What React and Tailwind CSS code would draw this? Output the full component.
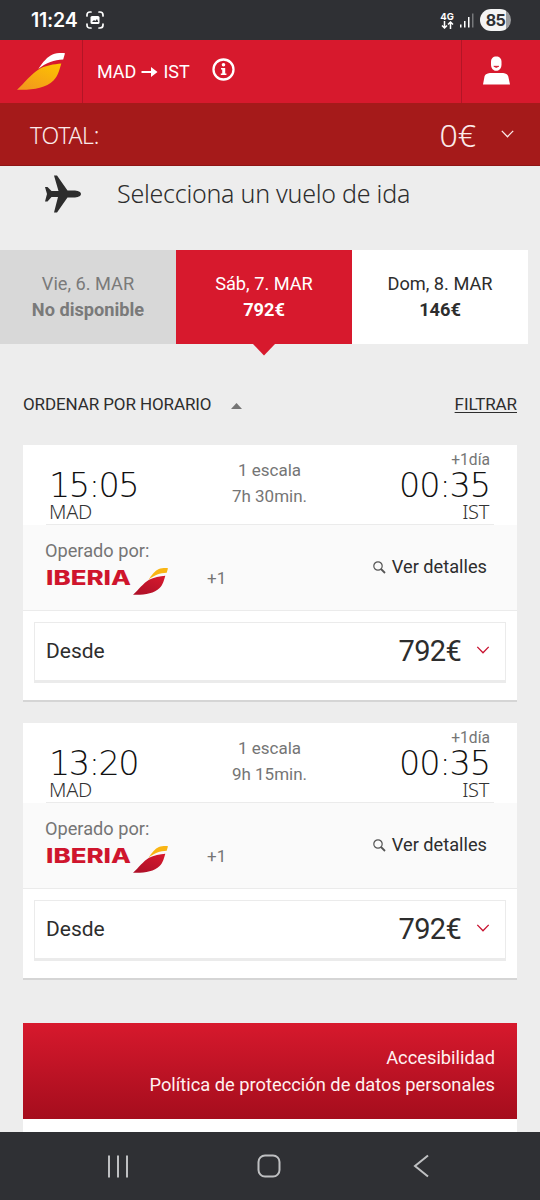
import { useState } from "react"

const flights = [
  { id: 1, departure: "15:05", arrival: "00:35", duration: "7h 30min.", price: "792€" },
  { id: 2, departure: "13:20", arrival: "00:35", duration: "9h 15min.", price: "792€" },
]

const days = [
  { label: "Vie, 6. MAR", price: "No disponible", available: false },
  { label: "Sáb, 7. MAR", price: "792€", available: true },
  { label: "Dom, 8. MAR", price: "146€", available: true },
]

function Wing({ className, top, from, to, id }) {
  return (
    <svg className={className} viewBox="17 53 48 37" preserveAspectRatio="none">
      <defs>
        <linearGradient id={id} x1="1" y1="0" x2="0.3" y2="1">
          <stop offset="0" stopColor={from} />
          <stop offset="1" stopColor={to} />
        </linearGradient>
      </defs>
      <path d="M38.300 69C43 62 47.500 56.500 52.500 54.500C56 53 61 53 65 53.200L63.200 59.600C54 60 46.500 62.800 38.300 69Z" fill={top} />
      <path
        d="M17 89.700C25 82.500 31 74 39 69.200C45.500 65.300 54 64.300 61.300 63.500C59.700 68.500 58.500 75.500 53.500 80.500C45.500 88.500 32 90.200 17 89.700Z"
        fill={`url(#${id})`}
      />
    </svg>
  )
}

function IberiaLogo({ id }) {
  return (
    <div className="flex items-start">
      <svg className="h-[22px] w-[87px]" viewBox="0 0 87 22">
        <text
          x="0"
          y="17"
          textLength="85"
          lengthAdjust="spacingAndGlyphs"
          fill="#cf152d"
          className="font-['Inter',sans-serif] text-[19.5px] font-extrabold"
        >
          IBERIA
        </text>
      </svg>
      <Wing id={id} className="h-[27px] w-[35px]" top="#f9b513" from="#d81a2e" to="#b01028" />
    </div>
  )
}

function Chevron({ className }) {
  return (
    <svg className={className} viewBox="0 0 13 8" fill="none" stroke="currentColor" strokeWidth="1.300">
      <path d="M0.800 0.900L6.500 6.700L12.200 0.900" />
    </svg>
  )
}

function StatusBar() {
  return (
    <div className="flex h-10 items-center justify-between bg-[#2f3034] pr-[29px] pl-[31px] text-white">
      <div className="flex items-center">
        <span className="mt-px w-[47px] font-['Inter',sans-serif] text-[19.5px] leading-none font-semibold tracking-[-0.2px]">11:24</span>
        <svg className="ml-[8px] h-[18px] w-[18px]" viewBox="0 0 18 18" fill="none" stroke="white" strokeWidth="1.700" strokeLinecap="round">
          <path d="M1 5V4Q1 1 4 1H5M13 1H14Q17 1 17 4V5M17 13V14Q17 17 14 17H13M5 17H4Q1 17 1 14V13" />
          <rect x="4.500" y="5" width="9" height="8" rx="1.500" fill="white" stroke="none" />
          <path d="M6 11L8 9L9.300 10L11 8L12.300 11Z" fill="#2f3034" stroke="none" />
        </svg>
      </div>
      <div className="flex items-center">
        <div className="mr-[1px] flex w-[14px] flex-col items-center">
          <span className="font-['Inter',sans-serif] text-[9.5px] leading-[9px] font-bold">4G</span>
          <svg className="h-[8px] w-[13px]" viewBox="0 0 13 8" fill="none" stroke="white" strokeWidth="1.500">
            <path d="M3.500 0V7M1 4.500L3.500 7L6 4.500M9.500 8V1M7 3.500L9.500 1L12 3.500" />
          </svg>
        </div>
        <svg className="ml-[5px] h-[15px] w-[14px]" viewBox="0 0 14 15" fill="white">
          <rect x="0" y="11.500" width="1.500" height="3" />
          <rect x="4" y="8" width="1.500" height="6.500" />
          <rect x="8" y="4" width="1.500" height="10.500" />
          <rect x="12" y="0.500" width="1.500" height="14" fill="#77787b" />
        </svg>
        <div className="ml-[6px] flex h-[22px] w-[31px] items-center justify-center rounded-full bg-linear-to-r from-[#f4f4f4] from-85% to-[#9a9b9d] to-85%">
          <span className="font-['Inter',sans-serif] text-[16px] leading-none font-bold tracking-[-0.5px] text-[#2f3034]">85</span>
        </div>
      </div>
    </div>
  )
}

function Header() {
  return (
    <header className="flex h-[63px] bg-[#d7192d] text-white">
      <div className="flex w-[83px] border-r border-[#b21526] pt-[13px] pl-[17px]">
        <Wing id="header" className="h-[37px] w-[48px]" top="#ffffff" from="#fdc400" to="#f39a1b" />
      </div>
      <div className="flex flex-1 items-center pl-[14px]">
        <span className="text-[18px] leading-[22px]">MAD</span>
        <svg className="mx-[5px] h-[12px] w-[17px]" viewBox="0 0 17 12" fill="white">
          <path d="M0.500 5.100H10V6.900H0.500ZM10 1L16.500 6L10 11Z" />
        </svg>
        <span className="text-[18px] leading-[22px]">IST</span>
        <svg className="mb-[4px] ml-[22px] h-[23px] w-[23px]" viewBox="0 0 23 23" fill="white">
          <circle cx="11.500" cy="11.500" r="10" fill="none" stroke="white" strokeWidth="2.300" />
          <circle cx="11.500" cy="6.800" r="1.800" />
          <path d="M9 10H13.200V15.500H14.400V17H8.800V15.500H10.200V11.500H9Z" />
        </svg>
      </div>
      <div className="flex w-[79px] border-l border-[#b21526] pt-[16px] pl-[20px]">
        <svg className="h-[29px] w-[29px]" viewBox="0 0 29 29" fill="white">
          <path d="M9 6C9 2.500 11 0.600 14.200 0.600S19.500 2.500 19.500 6V8.500C19.500 12.500 17 14.800 14.200 14.800S9 12.500 9 8.500Z" />
          <path d="M1 28.500L2.500 20.500C3 18 6 17.200 9 17H20C23 17.200 25.800 18 26.300 20.500L28 28.500Z" />
          <path d="M11.800 10.300Q14.200 12.500 16.800 10.300Z" fill="#d7192d" stroke="#d7192d" strokeWidth="0.800" />
        </svg>
      </div>
    </header>
  )
}

function DayTabs({ selected, onSelect }) {
  return (
    <div className="mr-[12px] grid h-[94px] grid-cols-3">
      {days.map((day, i) => (
        <button
          key={day.label}
          disabled={!day.available}
          onClick={() => onSelect(i)}
          className={`relative flex flex-col items-center pt-[21px] text-[18.2px] leading-[26px] ${
            !day.available ? "bg-[#d8d8d8] text-[#7a7a7a]" : selected === i ? "bg-[#d7192d] text-white" : "bg-white text-[#2d2d2d]"
          }`}
        >
          <span>{day.label}</span>
          <span className="font-bold">{day.price}</span>
          {selected === i && (
            <svg className="absolute top-full left-1/2 h-[12px] w-[22px] -translate-x-1/2" viewBox="0 0 22 12" fill="#d7192d">
              <path d="M0 0H22L11 11.500Z" />
            </svg>
          )}
        </button>
      ))}
    </div>
  )
}

function FlightCard({ flight }) {
  return (
    <article className="mx-[23px] h-[257px] border-b-2 border-[#d5d5d5] bg-white">
      <div className="mx-[23px] flex h-[80px] justify-between border-b border-[#ebebeb] pr-[4px] pl-[3px]">
        <div className="w-[100px] pt-[23px]">
          <div className="font-['DejaVu_Sans',sans-serif] text-[33.5px] leading-[36px] font-extralight tracking-[-1.5px] text-[#111]">{flight.departure}</div>
          <div className="-mt-px font-['Noto_Sans',sans-serif] text-[20px] leading-[18px] font-light tracking-[-0.3px] text-[#333]">MAD</div>
        </div>
        <div className="pt-[13px] text-center text-[17px] leading-[25.5px] text-[#757575]">
          <div>1 escala</div>
          <div>{flight.duration}</div>
        </div>
        <div className="w-[100px] text-right">
          <div className="pt-[8px] text-[15.6px] leading-[15px] text-[#757575]">+1día</div>
          <div className="font-['DejaVu_Sans',sans-serif] text-[33.5px] leading-[36px] font-extralight tracking-[-1.1px] text-[#111]">{flight.arrival}</div>
          <div className="-mt-px pr-px font-['Noto_Sans',sans-serif] text-[20px] leading-[18px] font-light tracking-[-0.3px] text-[#333]">IST</div>
        </div>
      </div>
      <div className="flex h-[86px] border-b border-[#ebebeb] bg-[#fafafa] pl-[22px]">
        <div className="w-[162px] pt-[15px]">
          <div className="text-[18.2px] leading-[22px] text-[#757575]">Operado por:</div>
          <div className="pt-[6px] pl-px">
            <IberiaLogo id={`wing-${flight.id}`} />
          </div>
        </div>
        <span className="pt-[42px] text-[17px] leading-[22px] text-[#757575]">+1</span>
        <button className="mr-[30px] mb-[1px] ml-auto flex items-center text-[18.2px] text-[#2d2d2d]">
          <svg className="mr-[6px] h-[13px] w-[13px]" viewBox="0 0 13 13" fill="none" stroke="#555" strokeWidth="1.200">
            <circle cx="5" cy="5" r="4.200" />
            <path d="M8 8L12 12" strokeWidth="1.800" />
          </svg>
          Ver detalles
        </button>
      </div>
      <div className="mx-[11px] mt-[11px] flex h-[61px] items-center border border-b-[3px] border-[#ebebeb] pr-[15px] pl-[11px] text-[#2d2d2d]">
        <span className="text-[21px]">Desde</span>
        <span className="ml-auto text-[29px] tracking-[-0.7px]">{flight.price}</span>
        <Chevron className="mb-[3px] ml-[15px] h-[8px] w-[14px] text-[#c8102e]" />
      </div>
    </article>
  )
}

function NavBar() {
  return (
    <nav className="flex h-[68px] items-center bg-[#2f3034] pl-[107px]">
      <svg className="h-[23px] w-[22px]" viewBox="0 0 22 23" stroke="#bfc0c2" strokeWidth="2">
        <path d="M2 0.500V22.500M11 0.500V22.500M20 0.500V22.500" />
      </svg>
      <svg className="ml-[128px] h-[24px] w-[24px]" viewBox="0 0 24 24" fill="none" stroke="#bfc0c2" strokeWidth="2">
        <rect x="1.500" y="1.500" width="21" height="21" rx="6.500" />
      </svg>
      <svg className="ml-[132px] h-[24px] w-[16px]" viewBox="0 0 16 24" fill="none" stroke="#bfc0c2" strokeWidth="2">
        <path d="M15 1.500L2 12L15 22.500" />
      </svg>
    </nav>
  )
}

export default function App() {
  const [selectedDay, setSelectedDay] = useState(1)

  return (
    <div className="flex h-[1200px] w-[540px] flex-col overflow-hidden bg-[#ededed] font-['Roboto',sans-serif] text-[#2d2d2d]">
      <StatusBar />
      <Header />
      <div className="flex h-[63px] items-center border-b border-[#8f1515] bg-[#a51a1a] pt-[2px] pr-[26px] pl-[30px] font-['Noto_Sans',sans-serif] font-light text-[#fbeaea]">
        <span className="text-[23px] tracking-[-0.3px]">TOTAL:</span>
        <span className="ml-auto text-[32px]">0€</span>
        <Chevron className="mb-[3px] ml-[25px] h-[8px] w-[13px]" />
      </div>

      <div className="flex h-[84px] items-start pl-[44px]">
        <svg className="mt-[9px] h-[38px] w-[38px]" viewBox="0 0 38 38" fill="#2d2d2d">
          <path d="M10 0.500H13L23.500 15.500H31C35 15.700 37 17.500 37 19S35 22.300 31 22.500H23.500L13 37.500H10L14 22H7.500L3.500 26.500H1L3 19L1 12H3.500L7.500 16H14.500Z" />
        </svg>
        <h1 className="mt-[9px] ml-[35px] font-['Noto_Sans',sans-serif] text-[25px] leading-[36px] font-light tracking-[-0.25px] whitespace-nowrap">Selecciona un vuelo de ida</h1>
      </div>

      <DayTabs selected={selectedDay} onSelect={setSelectedDay} />

      <div className="flex h-[101px] items-center px-[23px] pt-[20px]">
        <span className="text-[17px] tracking-[-0.1px]">ORDENAR POR HORARIO</span>
        <svg className="mt-[2px] ml-[20px] h-[6px] w-[11px]" viewBox="0 0 11 6" fill="#757575">
          <path d="M5.500 0L11 6H0Z" />
        </svg>
        <button className="ml-auto text-[17px] tracking-[-0.1px] underline underline-offset-2">FILTRAR</button>
      </div>

      <div className="flex flex-col gap-[21px]">
        {flights.map((flight) => (
          <FlightCard key={flight.id} flight={flight} />
        ))}
      </div>

      <footer className="mx-[23px] mt-[43px] h-[109px] bg-white">
        <div className="flex h-[96px] flex-col items-end bg-linear-to-b from-[#d7192d] to-[#a50d1d] pt-[22px] pr-[22px] text-[18.3px] leading-[26.5px] text-[#fff0f0]">
          <span>Accesibilidad</span>
          <span>Política de protección de datos personales</span>
        </div>
      </footer>
      <NavBar />
    </div>
  )
}
